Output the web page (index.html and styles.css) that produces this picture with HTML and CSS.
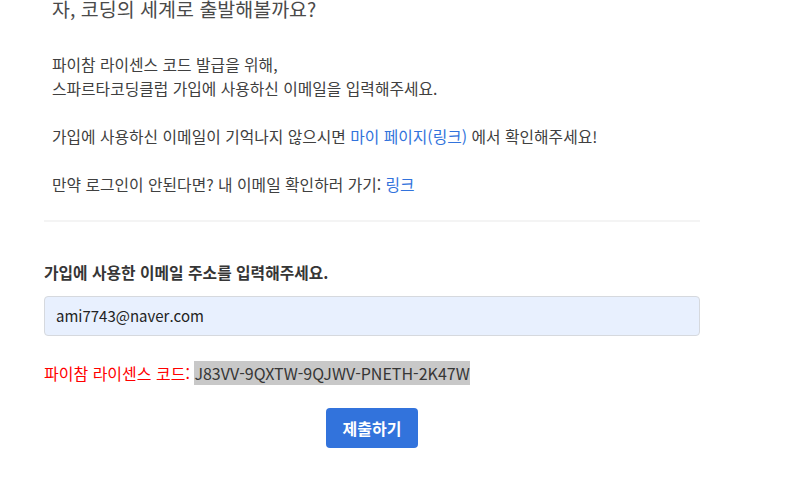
FILE: index.html
```html
<!DOCTYPE html>
<html lang="ko">
<head>
<meta charset="utf-8">
<link rel="stylesheet" href="styles.css">
</head>
<body>
<div class="page">
  <h2 class="title">자, 코딩의 세계로 출발해볼까요?</h2>
  <p class="intro">
    파이참 라이센스 코드 발급을 위해,<br>
    스파르타코딩클럽 가입에 사용하신 이메일을 입력해주세요.<br><br>
    가입에 사용하신 이메일이 기억나지 않으시면 <a class="link" href="#">마이 페이지(링크)</a> 에서 확인해주세요!<br><br>
    만약 로그인이 안된다면? 내 이메일 확인하러 가기: <a class="link" href="#">링크</a>
  </p>
  <div class="divider"></div>
  <div class="label">가입에 사용한 이메일 주소를 입력해주세요.</div>
  <div class="input">ami7743@naver.com</div>
  <div class="code-line"><span class="code-label">파이참 라이센스 코드:</span> <span class="code">J83VV-9QXTW-9QJWV-PNETH-2K47W</span></div>
  <div class="actions"><button class="btn">제출하기</button></div>
</div>
</body>
</html>
```
FILE: styles.css
```css
html, body {
  margin: 0;
  padding: 0;
  background: #fff;
}
body {
  font-family: "Noto Sans CJK KR", "Noto Sans", sans-serif;
  color: #4a4a4a;
}
.page {
  width: 656px;
  margin-left: 44px;
  display: flex;
  flex-direction: column;
}
.title {
  margin: -5px 0 0 0;
  padding-left: 8px;
  font-size: 19.5px;
  line-height: 28px;
  font-weight: 400;
  color: #4a4a4a;
}
.intro {
  margin: 30px 0 0 0;
  padding-left: 8px;
  font-size: 15.8px;
  line-height: 24px;
  color: #404040;
}
.link {
  color: #3273dc;
  text-decoration: none;
}
.divider {
  margin-top: 23px;
  height: 2px;
  background: #f4f4f4;
}
.label {
  margin-top: 39px;
  font-size: 15.8px;
  line-height: 24px;
  font-weight: 700;
  color: #363636;
}
.input {
  margin-top: 11px;
  height: 40px;
  box-sizing: border-box;
  border: 1px solid #d6d9de;
  border-radius: 4px;
  background: #e8f0fe;
  padding: 0 11px;
  font-size: 15px;
  line-height: 38px;
  color: #222;
}
.code-line {
  margin-top: 25px;
  font-size: 16px;
  line-height: 24px;
}
.code-label {
  color: #ff0000;
}
.code {
  background: #c8c8c8;
  color: #363636;
}
.actions {
  margin-top: 23px;
  display: flex;
  justify-content: center;
}
.btn {
  width: 92px;
  height: 40px;
  border: none;
  border-radius: 4px;
  background: #3273dc;
  color: #fff;
  font-family: "Noto Sans CJK KR", "Noto Sans", sans-serif;
  font-size: 16px;
  font-weight: 700;
  padding: 0;
}
```
